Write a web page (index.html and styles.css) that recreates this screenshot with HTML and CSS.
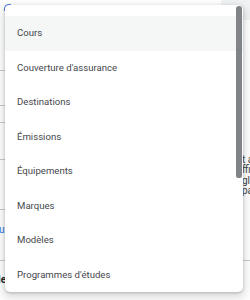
FILE: index.html
```html
<!DOCTYPE html>
<html lang="fr">
<head>
    <meta charset="UTF-8">
    <meta name="viewport" content="width=device-width, initial-scale=1.0">
    <title>Catégories</title>
    <link rel="stylesheet" href="styles.css">
</head>
<body>
    <div class="page">
        <!-- page content sitting behind the open menu -->
        <div class="backdrop">
            <div class="side-left">
                <div class="rule rule-a"></div>
                <div class="rule rule-b"></div>
                <div class="rule rule-c"></div>
                <div class="rule rule-d"></div>
                <div class="rule rule-e"></div>
                <div class="link-text">ur</div>
                <div class="rule rule-f"></div>
                <div class="bold-text">le</div>
            </div>
            <div class="middle">
                <div class="top-band"></div>
            </div>
            <div class="side-right">
                <div class="top-band-right"></div>
                <div class="para">
                    <span>t a</span>
                    <span>ffi</span>
                    <span>gle</span>
                    <span>pa</span>
                </div>
                <div class="rule rule-g"></div>
            </div>
        </div>

        <div class="select-outline"></div>

        <div class="menu">
            <ul class="menu-list">
                <li class="menu-item active">Cours</li>
                <li class="menu-item">Couverture d'assurance</li>
                <li class="menu-item">Destinations</li>
                <li class="menu-item">Émissions</li>
                <li class="menu-item">Équipements</li>
                <li class="menu-item">Marques</li>
                <li class="menu-item">Modèles</li>
                <li class="menu-item">Programmes d'études</li>
            </ul>
            <div class="scroll-thumb"></div>
        </div>
    </div>
</body>
</html>
```

FILE: styles.css
```css
body {
    margin: 0;
    font-family: Roboto, 'Liberation Sans', sans-serif;
    background-color: #fff;
    overflow: hidden;
}

.page {
    position: relative;
    width: 250px;
    height: 300px;
    overflow: hidden;
}

.backdrop {
    display: flex;
    height: 300px;
}

.side-left {
    width: 5px;
    display: flex;
    flex-direction: column;
}

.rule {
    border-bottom: 1px solid #c8cacc;
    flex-shrink: 0;
}

.rule-a { height: 70px; }
.rule-b { height: 34px; }
.rule-c { height: 16px; }
.rule-d { height: 36px; }
.rule-e { height: 49px; }
.rule-f { height: 24px; }
.rule-g { height: 0; margin-top: 64px; }

.link-text {
    margin-top: 14px;
    line-height: 12px;
    font-size: 10px;
    color: #1a73e8;
    white-space: nowrap;
    margin-left: -1px;
}

.bold-text {
    margin-top: 13px;
    line-height: 12px;
    font-size: 10px;
    font-weight: bold;
    color: #202124;
    white-space: nowrap;
    margin-left: -2px;
}

.middle {
    width: 238px;
}

.top-band {
    margin-left: 216px;
    height: 20px;
    background-color: #f1f3f4;
}

.side-right {
    width: 7px;
    display: flex;
    flex-direction: column;
}

.top-band-right {
    height: 20px;
    background-color: #f1f3f4;
}

.para {
    margin-top: 135px;
    display: flex;
    flex-direction: column;
    font-size: 10px;
    line-height: 10.3px;
    color: #3c4043;
    white-space: nowrap;
    margin-left: -1px;
}

.select-outline {
    position: absolute;
    left: 4px;
    top: 4px;
    width: 6px;
    height: 6px;
    border-top: 1px solid #4a7fe0;
    border-left: 1px solid #4a7fe0;
    border-radius: 5px 0 0 0;
}

.menu {
    position: absolute;
    left: 5px;
    top: 5px;
    width: 238px;
    height: 287px;
    background-color: #fff;
    border-radius: 5px;
    box-shadow: 0 1px 3px rgba(60, 64, 67, 0.3), 0 4px 8px 3px rgba(60, 64, 67, 0.15);
    overflow: hidden;
}

.menu-list {
    list-style: none;
    margin: 0;
    padding: 11px 0 0;
}

.menu-item {
    height: 34.5px;
    line-height: 34.5px;
    padding-left: 12px;
    font-size: 9.6px;
    color: #45484c;
    white-space: nowrap;
}

.menu-item.active {
    background-color: #f5f6f6;
}

.scroll-thumb {
    position: absolute;
    right: 1px;
    top: 1px;
    width: 6px;
    height: 172px;
    background-color: #808488;
    border-radius: 3px 3px 2px 2px;
}
```
